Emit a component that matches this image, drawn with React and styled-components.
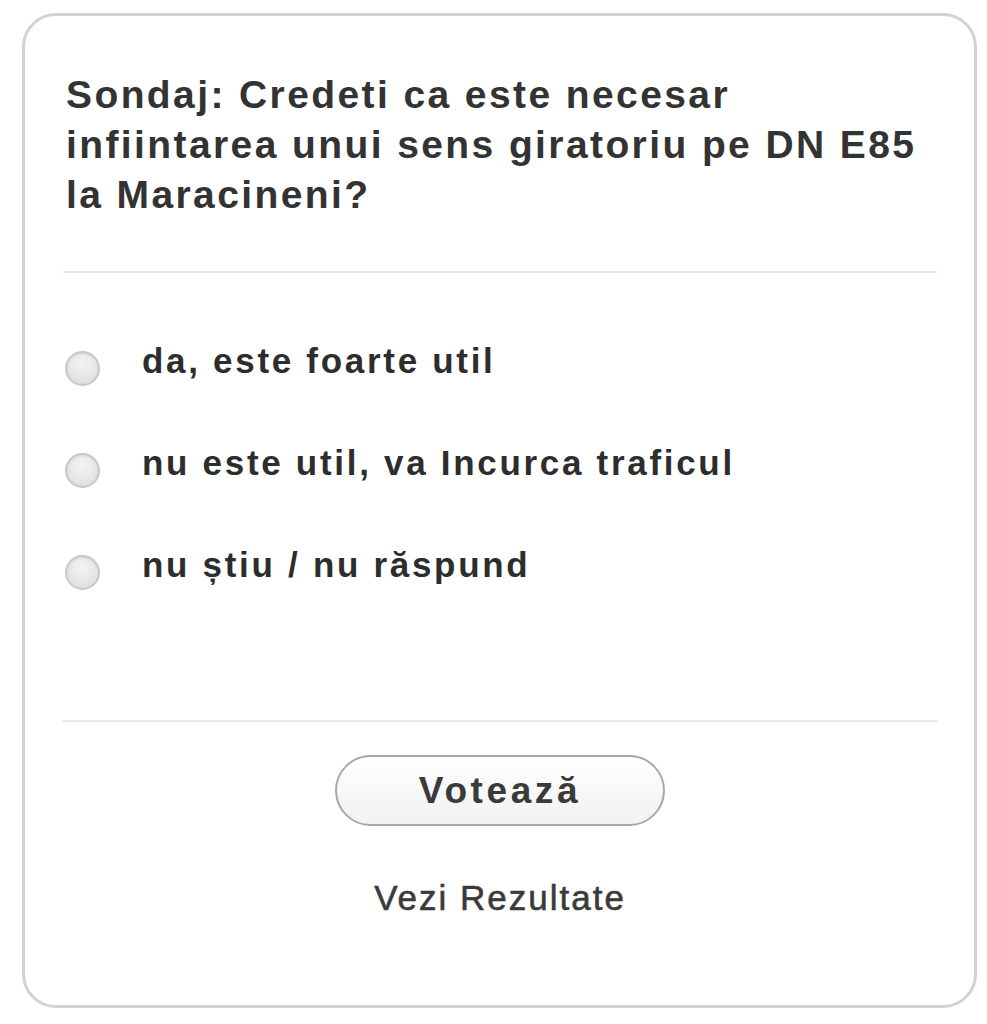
import React from "react";
import styled, { createGlobalStyle } from "styled-components";

const Global = createGlobalStyle`
  html, body { margin: 0; padding: 0; background: #ffffff; }
  body { font-family: "Liberation Sans", Arial, sans-serif; }
`;

const Card = styled.div`
  box-sizing: border-box;
  margin: 13px 0 0 22px;
  width: 955px;
  height: 995px;
  border: 3px solid #d2d2d2;
  border-radius: 34px;
  background: #fff;
  padding: 0 37px 0 38px;
  display: flex;
  flex-direction: column;
`;

const Title = styled.h2`
  margin: 54px 0 0 3px;
  font-size: 39px;
  line-height: 50px;
  font-weight: bold;
  color: #333;
  letter-spacing: 2.4px;
`;

const Divider = styled.hr`
  border: 0;
  height: 2px;
  background: #e6e6e6;
  margin: ${(p) => p.$top}px 0 0 0;
  width: 100%;
`;

const Options = styled.div`
  display: flex;
  flex-direction: column;
  gap: 68px;
  margin-top: 71px;
`;

const Option = styled.label`
  display: flex;
  align-items: center;
  gap: 42px;
  height: 34px;
  cursor: pointer;
`;

const Radio = styled.span`
  flex: none;
  width: 35px;
  height: 35px;
  margin-left: 2px;
  margin-top: 14px;
  box-sizing: border-box;
  border-radius: 50%;
  border: 2px solid #c8c8c8;
  background: radial-gradient(circle at 50% 35%, #f4f4f4 0%, #e2e2e2 70%, #d6d6d6 100%);
  box-shadow: inset 0 1px 2px rgba(0,0,0,0.08);
`;

const OptionText = styled.span`
  font-size: 35px;
  font-weight: bold;
  color: #2d2d2d;
  letter-spacing: 2.7px;
  line-height: 34px;
`;

const Footer = styled.div`
  display: flex;
  flex-direction: column;
  align-items: center;
`;

const VoteButton = styled.button`
  margin-top: 33px;
  width: 330px;
  height: 71px;
  box-sizing: border-box;
  border-radius: 36px;
  border: 2px solid #a8a8a8;
  background: linear-gradient(#ffffff, #f1f1f1);
  font-family: "Liberation Sans", Arial, sans-serif;
  font-size: 37px;
  font-weight: bold;
  letter-spacing: 3.6px;
  color: #3a3a3a;
  cursor: pointer;
`;

const ResultsLink = styled.a`
  margin-top: 52px;
  font-size: 35px;
  line-height: 40px;
  color: #3a3a3a;
  letter-spacing: 2px;
  -webkit-text-stroke: 0.6px #3a3a3a;
  text-decoration: none;
  cursor: pointer;
`;

const options = [
  "da, este foarte util",
  "nu este util, va Incurca traficul",
  "nu știu / nu răspund",
];

export default function App() {
  return (
    <>
      <Global />
      <Card>
        <Title>
          Sondaj: Credeti ca este necesar infiintarea unui sens giratoriu pe DN E85 la Maracineni?
        </Title>
        <Divider $top={51} />
        <Options>
          {options.map((o) => (
            <Option key={o}>
              <Radio />
              <OptionText>{o}</OptionText>
            </Option>
          ))}
        </Options>
        <Divider $top={138} />
        <Footer>
          <VoteButton>Votează</VoteButton>
          <ResultsLink>Vezi Rezultate</ResultsLink>
        </Footer>
      </Card>
    </>
  );
}
